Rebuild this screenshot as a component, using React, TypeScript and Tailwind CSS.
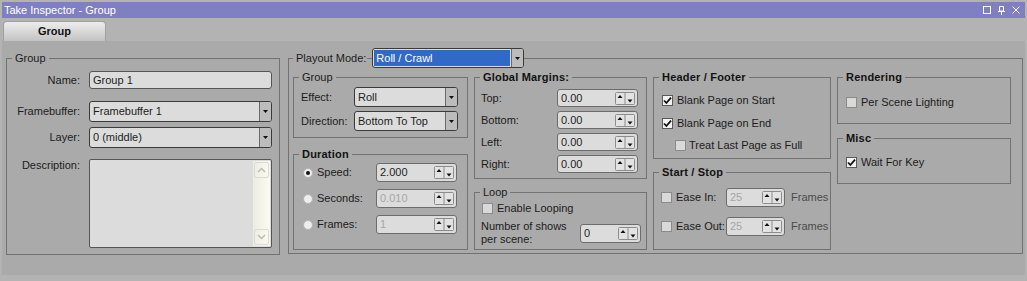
import React from 'react';

const base = "font-['Liberation_Sans',Arial,sans-serif] text-[11px] leading-[13px] text-[#1c1c1c]";

type BoxProps = { label: string; bold?: boolean; className?: string; children?: React.ReactNode };

function Box({ label, bold, className, children }: BoxProps) {
  return (
    <fieldset className={`border border-[#727272] min-w-0 ${className ?? ''}`}>
      <legend
        className={`ml-[5px] px-[3px] leading-[14px] ${bold ? 'font-bold text-[#121212] tracking-[0.2px]' : ''}`}
      >
        {label}
      </legend>
      {children}
    </fieldset>
  );
}

function Check({ checked }: { checked?: boolean }) {
  return (
    <span
      className={`w-[11px] h-[11px] shrink-0 flex items-center justify-center border ${
        checked ? 'bg-[#f3f3f3] border-[#5a5a5a]' : 'bg-[#d9d9d9] border-[#8a8a8a]'
      }`}
    >
      {checked && (
        <svg width="9" height="9" viewBox="0 0 9 9">
          <path d="M1 4.5 L3.4 7 L8 1.6" stroke="#111" strokeWidth="1.8" fill="none" />
        </svg>
      )}
    </span>
  );
}

function Radio({ checked }: { checked?: boolean }) {
  return (
    <span className="w-[10px] h-[10px] shrink-0 rounded-full bg-[#ededed] border border-[#b4b4b4] flex items-center justify-center">
      {checked && <span className="w-[4px] h-[4px] rounded-full bg-[#111]" />}
    </span>
  );
}

function Arrows() {
  return (
    <svg width="20" height="13" viewBox="0 0 20 13" className="shrink-0">
      <rect x="0.5" y="0.5" width="19" height="12" rx="1" fill="#e3e3e3" stroke="#8c8c8c" />
      <line x1="10" y1="1" x2="10" y2="12" stroke="#8c8c8c" />
      <path d="M2.5 6 L7.5 6 L5 3 Z" fill="#111" />
      <path d="M12.5 7.5 L17.5 7.5 L15 10.5 Z" fill="#111" />
    </svg>
  );
}

function Spin({ value, w, h, disabled }: { value: string; w: string; h: string; disabled?: boolean }) {
  return (
    <div
      className={`${w} ${h} shrink-0 rounded-[3px] border border-[#6c6c6c] bg-[#dcdcdc] flex items-center pl-[3px] pr-[2px]`}
    >
      <span className={`flex-1 ${disabled ? 'text-[#a6a6a6]' : ''}`}>{value}</span>
      <Arrows />
    </div>
  );
}

function Combo({ value, w, h, highlight }: { value: string; w: string; h: string; highlight?: boolean }) {
  return (
    <div className={`${w} ${h} shrink-0 rounded-[3px] border border-[#3a3a3a] bg-[#dcdcdc] flex overflow-hidden`}>
      {highlight ? (
        <div className="flex-1 m-px bg-[#3169c6] text-white flex items-center pl-[2px]">{value}</div>
      ) : (
        <div className="flex-1 flex items-center pl-[3px]">{value}</div>
      )}
      <div className="w-[12px] border-l border-[#6a6a6a] bg-[#bcbcbc] flex items-center justify-center">
        <svg width="5" height="3" viewBox="0 0 5 3">
          <path d="M0 0 L5 0 L2.5 3 Z" fill="#111" />
        </svg>
      </div>
    </div>
  );
}

function Chevron({ up }: { up?: boolean }) {
  return (
    <svg width="9" height="6" viewBox="0 0 9 6">
      <path d={up ? 'M1 5 L4.5 1.5 L8 5' : 'M1 1 L4.5 4.5 L8 1'} stroke="#b9b9b0" strokeWidth="1.4" fill="none" />
    </svg>
  );
}

function LeftRow({ label, className, top, children }: { label: string; className?: string; top?: boolean; children: React.ReactNode }) {
  return (
    <div className={`flex ${top ? 'items-start' : 'items-center'} ${className ?? ''}`}>
      <span className="w-[73px] mr-[9px] text-right">{label}</span>
      {children}
    </div>
  );
}

export default function App() {
  return (
    <div className={`${base} w-[1027px] h-[281px] bg-[#b3b3b3] px-[2px] pt-[2px] flex flex-col overflow-hidden`}>
      {/* title bar */}
      <div className="h-[16px] bg-[#7f7fc1] flex items-center pl-[2px] pr-[5px] text-white shrink-0">
        <span>Take Inspector - Group</span>
        <div className="ml-auto flex items-center gap-[7px]">
          <svg width="8" height="8" viewBox="0 0 8 8">
            <rect x="0.5" y="0.5" width="7" height="7" fill="none" stroke="#fff" />
          </svg>
          <svg width="7" height="9" viewBox="0 0 7 9">
            <path d="M1.5 0.5 H5.5 V5 H1.5 Z" fill="none" stroke="#fff" />
            <path d="M0 5.5 H7" stroke="#fff" />
            <path d="M3.5 5.5 V9" stroke="#fff" />
          </svg>
          <svg width="8" height="8" viewBox="0 0 8 8">
            <path d="M0.5 0.5 L7.5 7.5 M7.5 0.5 L0.5 7.5" stroke="#fff" strokeWidth="1" />
          </svg>
        </div>
      </div>

      {/* tab strip */}
      <div className="h-[23px] pt-[3px] pl-[1px] shrink-0">
        <div className="w-[103px] h-[20px] rounded-t-[4px] bg-linear-to-b from-[#ededed] to-[#c3c3c3] border border-b-0 border-[#a0a0a0] flex items-center justify-center font-bold text-[#111]">
          Group
        </div>
      </div>

      {/* panel */}
      <div className="h-[234px] bg-[#aaaaaa] pl-[4px] pt-[7px] flex items-start gap-[8px] shrink-0">
        <Box label="Group" className="w-[274px] mt-[3px]">
          <div className="pr-[7px] pb-[6px]">
            <LeftRow label="Name:" className="mt-[6px]">
              <div className="w-[183px] h-[18px] rounded-[3px] border border-[#555] bg-[#dcdcdc] flex items-center pl-[3px]">
                Group 1
              </div>
            </LeftRow>
            <LeftRow label="Framebuffer:" className="mt-[12px]">
              <Combo value="Framebuffer 1" w="w-[183px]" h="h-[21px]" />
            </LeftRow>
            <LeftRow label="Layer:" className="mt-[5px]">
              <Combo value="0 (middle)" w="w-[183px]" h="h-[21px]" />
            </LeftRow>
            <LeftRow label="Description:" className="mt-[11px]" top>
              <div className="w-[183px] h-[89px] rounded-[2px] border border-[#555] bg-[#dcdcdc] flex justify-end pr-[1px] py-px">
                <div className="w-[17px] bg-linear-to-r from-[#ecece3] to-[#fbfbf2] flex flex-col justify-between">
                  <div className="h-[16px] m-px rounded-[2px] border border-[#dadad2] flex items-center justify-center">
                    <Chevron up />
                  </div>
                  <div className="h-[16px] m-px rounded-[2px] border border-[#dadad2] flex items-center justify-center">
                    <Chevron />
                  </div>
                </div>
              </div>
            </LeftRow>
          </div>
        </Box>

        <fieldset className="w-[735px] border border-[#727272] min-w-0">
          <legend className="ml-[4px] pl-[3px]">
            <div className="flex items-center h-[20px]">
              <span className="pr-[1px]">Playout Mode:</span>
              <span className="w-[5px] h-px bg-[#727272]" />
              <Combo value="Roll / Crawl" w="w-[152px]" h="h-[20px]" highlight />
            </div>
          </legend>

          <div className="flex items-start gap-[6px] pl-[4px] pt-[2px] pb-[3px]">
            {/* column 1 */}
            <div className="w-[175px] flex flex-col">
              <Box label="Group">
                <div className="pl-[7px] pr-[9px] pt-[3px] pb-[6px] flex flex-col gap-[4px]">
                  <div className="flex items-center">
                    <span className="w-[53px]">Effect:</span>
                    <Combo value="Roll" w="w-[104px]" h="h-[20px]" />
                  </div>
                  <div className="flex items-center">
                    <span className="w-[53px]">Direction:</span>
                    <Combo value="Bottom To Top" w="w-[104px]" h="h-[20px]" />
                  </div>
                </div>
              </Box>
              <Box label="Duration" bold className="mt-[9px]">
                <div className="pl-[9px] pt-[2px] pb-[15px] flex flex-col gap-[7px]">
                  {[
                    { l: 'Speed:', v: '2.000', on: true },
                    { l: 'Seconds:', v: '0.010' },
                    { l: 'Frames:', v: '1' },
                  ].map((r) => (
                    <div key={r.l} className="flex items-center h-[19px]">
                      <Radio checked={r.on} />
                      <span className="ml-[4px] w-[59px]">{r.l}</span>
                      <Spin value={r.v} w="w-[81px]" h="h-[19px]" disabled={!r.on} />
                    </div>
                  ))}
                </div>
              </Box>
            </div>

            {/* column 2 */}
            <div className="w-[173px] flex flex-col">
              <Box label="Global Margins:" bold>
                <div className="pl-[6px] pt-[5px] pb-[5px] flex flex-col gap-[4px]">
                  {['Top:', 'Bottom:', 'Left:', 'Right:'].map((l) => (
                    <div key={l} className="flex items-center">
                      <span className="w-[76px]">{l}</span>
                      <Spin value="0.00" w="w-[81px]" h="h-[18px]" />
                    </div>
                  ))}
                </div>
              </Box>
              <Box label="Loop" className="mt-[6px]">
                <div className="pl-[6px] pt-[4px] pb-[3px]">
                  <div className="flex items-center h-[11px] ml-[1px]">
                    <Check />
                    <span className="ml-[4px]">Enable Looping</span>
                  </div>
                  <div className="flex items-center mt-[6px]">
                    <span className="w-[99px]">
                      Number of shows
                      <br />
                      per scene:
                    </span>
                    <Spin value="0" w="w-[61px]" h="h-[19px]" />
                  </div>
                </div>
              </Box>
            </div>

            {/* column 3 */}
            <div className="w-[178px] flex flex-col">
              <Box label="Header / Footer" bold>
                <div className="pl-[8px] pt-[11px] pb-[7px]">
                  <div className="flex items-center h-[11px]">
                    <Check checked />
                    <span className="ml-[4px]">Blank Page on Start</span>
                  </div>
                  <div className="flex items-center h-[11px] mt-[12px]">
                    <Check checked />
                    <span className="ml-[4px]">Blank Page on End</span>
                  </div>
                  <div className="flex items-center h-[11px] mt-[11px] ml-[13px]">
                    <Check />
                    <span className="ml-[3px]">Treat Last Page as Full</span>
                  </div>
                </div>
              </Box>
              <Box label="Start / Stop" bold className="mt-[6px]">
                <div className="pl-[7px] pt-[9px] pb-[13px] flex flex-col gap-[10px]">
                  {['Ease In:', 'Ease Out:'].map((l) => (
                    <div key={l} className="flex items-center h-[19px]">
                      <div className="w-[65px] flex items-center">
                        <Check />
                        <span className="ml-[4px]">{l}</span>
                      </div>
                      <Spin value="25" w="w-[59px]" h="h-[19px]" disabled />
                      <span className="ml-[6px] text-[#4a4a4a]">Frames</span>
                    </div>
                  ))}
                </div>
              </Box>
            </div>

            {/* column 4 */}
            <div className="w-[174px] flex flex-col">
              <Box label="Rendering" bold>
                <div className="pl-[8px] pt-[13px] pb-[15px]">
                  <div className="flex items-center h-[11px]">
                    <Check />
                    <span className="ml-[4px]">Per Scene Lighting</span>
                  </div>
                </div>
              </Box>
              <Box label="Misc" bold className="mt-[7px]">
                <div className="pl-[8px] pt-[12px] pb-[15px]">
                  <div className="flex items-center h-[11px]">
                    <Check checked />
                    <span className="ml-[4px]">Wait For Key</span>
                  </div>
                </div>
              </Box>
            </div>
          </div>
        </fieldset>
      </div>
    </div>
  );
}
